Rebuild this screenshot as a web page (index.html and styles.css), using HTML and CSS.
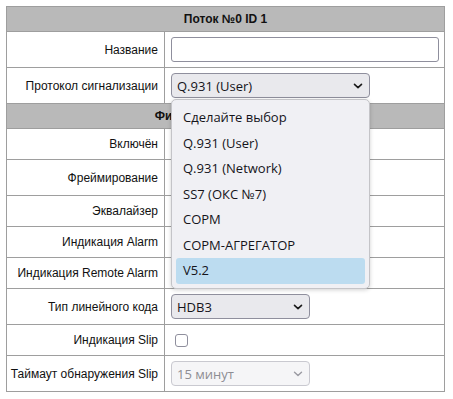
FILE: index.html
```html
<!DOCTYPE html>
<html lang="ru">
<head>
<meta charset="utf-8">
<link rel="stylesheet" href="styles.css">
</head>
<body>
<table class="grid">
  <colgroup><col class="c1"><col class="c2"></colgroup>
  <tr class="hdr"><td colspan="2">Поток №0 ID 1</td></tr>
  <tr class="ctl">
    <td class="lbl">Название</td>
    <td class="val"><div class="text-input"></div></td>
  </tr>
  <tr class="ctl">
    <td class="lbl">Протокол сигнализации</td>
    <td class="val">
      <div class="select-wrap">
        <div class="select wide"><span>Q.931 (User)</span>
          <svg class="chev" width="10" height="6" viewBox="0 0 10 6"><path d="M1.5 1.3 L5 4.6 L8.5 1.3" fill="none" stroke="#1a1a1a" stroke-width="1.6" stroke-linecap="round" stroke-linejoin="round"/></svg>
        </div>
        <ul class="popup">
          <li>Сделайте выбор</li>
          <li>Q.931 (User)</li>
          <li>Q.931 (Network)</li>
          <li>SS7 (ОКС №7)</li>
          <li>СОРМ</li>
          <li>СОРМ-АГРЕГАТОР</li>
          <li class="sel">V5.2</li>
        </ul>
      </div>
    </td>
  </tr>
  <tr class="hdr"><td colspan="2">Физические параметры</td></tr>
  <tr class="chk"><td class="lbl">Включён</td><td class="val"><span class="box"></span></td></tr>
  <tr class="ctl"><td class="lbl">Фреймирование</td><td class="val"></td></tr>
  <tr class="chk"><td class="lbl">Эквалайзер</td><td class="val"><span class="box"></span></td></tr>
  <tr class="chk"><td class="lbl">Индикация Alarm</td><td class="val"><span class="box"></span></td></tr>
  <tr class="chk"><td class="lbl">Индикация Remote Alarm</td><td class="val"><span class="box"></span></td></tr>
  <tr class="ctl">
    <td class="lbl">Тип линейного кода</td>
    <td class="val">
      <div class="select short"><span>HDB3</span>
        <svg class="chev" width="10" height="6" viewBox="0 0 10 6"><path d="M1.5 1.3 L5 4.6 L8.5 1.3" fill="none" stroke="#1a1a1a" stroke-width="1.6" stroke-linecap="round" stroke-linejoin="round"/></svg>
      </div>
    </td>
  </tr>
  <tr class="chk"><td class="lbl">Индикация Slip</td><td class="val"><span class="box"></span></td></tr>
  <tr class="ctl">
    <td class="lbl">Таймаут обнаружения Slip</td>
    <td class="val">
      <div class="select short disabled"><span>15 минут</span>
        <svg class="chev" width="10" height="6" viewBox="0 0 10 6"><path d="M1.5 1.3 L5 4.6 L8.5 1.3" fill="none" stroke="#9a9aa2" stroke-width="1.4" stroke-linecap="round" stroke-linejoin="round"/></svg>
      </div>
    </td>
  </tr>
</table>
</body>
</html>
```

FILE: styles.css
```css
html, body {
  margin: 0;
  padding: 0;
  background: #ffffff;
}
body {
  padding: 6px;
  font-family: "Liberation Sans", Arial, sans-serif;
  font-size: 12px;
  color: #111111;
}
.grid {
  border-collapse: collapse;
  width: 438px;
  table-layout: fixed;
}
.c1 { width: 158px; }
.c2 { width: 280px; }
.grid td {
  border: 1px solid #9e9e9e;
  padding: 0;
  vertical-align: middle;
}
.hdr td {
  height: 24px;
  background: #b9b9b9;
  text-align: center;
  font-weight: bold;
}
.ctl td { height: 35px; }
.chk td { height: 30px; }
.lbl {
  text-align: right;
  padding-right: 6px !important;
  white-space: nowrap;
}
.val {
  padding-left: 6px !important;
  padding-right: 4px !important;
}
.text-input {
  box-sizing: border-box;
  height: 25px;
  width: 268px;
  border: 1px solid #8f8f9d;
  border-radius: 3px;
  background: #fff;
}
.select-wrap {
  position: relative;
}
.select {
  box-sizing: border-box;
  height: 25px;
  border: 1px solid #8f8f9d;
  border-radius: 4px;
  background: #e9e9ed;
  display: flex;
  align-items: center;
  justify-content: space-between;
  padding: 0 6px 0 5px;
  font-family: "Open Sans", "Noto Sans", sans-serif;
  font-size: 13px;
  color: #15141a;
}
.select.wide { width: 199px; }
.select.short { width: 139px; }
.select.disabled {
  background: #f5f5f7;
  border-color: #c9c9d0;
  color: #8d8d93;
}
.chev { display: block; }
.popup {
  position: absolute;
  left: 0;
  top: 26px;
  width: 199px;
  box-sizing: border-box;
  margin: 0;
  padding: 5px 4px 4px;
  list-style: none;
  background: #f0f0f4;
  border: 1px solid #c4c4c8;
  border-radius: 5px;
  box-shadow: 0 1px 4px rgba(0, 0, 0, 0.18);
  font-family: "Open Sans", "Noto Sans", sans-serif;
  font-size: 13px;
  color: #15141a;
  z-index: 2;
}
.popup li {
  height: 25.5px;
  line-height: 25.5px;
  padding-left: 7px;
  border-radius: 3px;
}
.popup li.sel {
  background: #bcdcf0;
}
.box {
  display: block;
  box-sizing: border-box;
  width: 13px;
  height: 13px;
  margin-left: 4px;
  border: 1px solid #8f8f9d;
  border-radius: 3px;
  background: #fff;
}
```
